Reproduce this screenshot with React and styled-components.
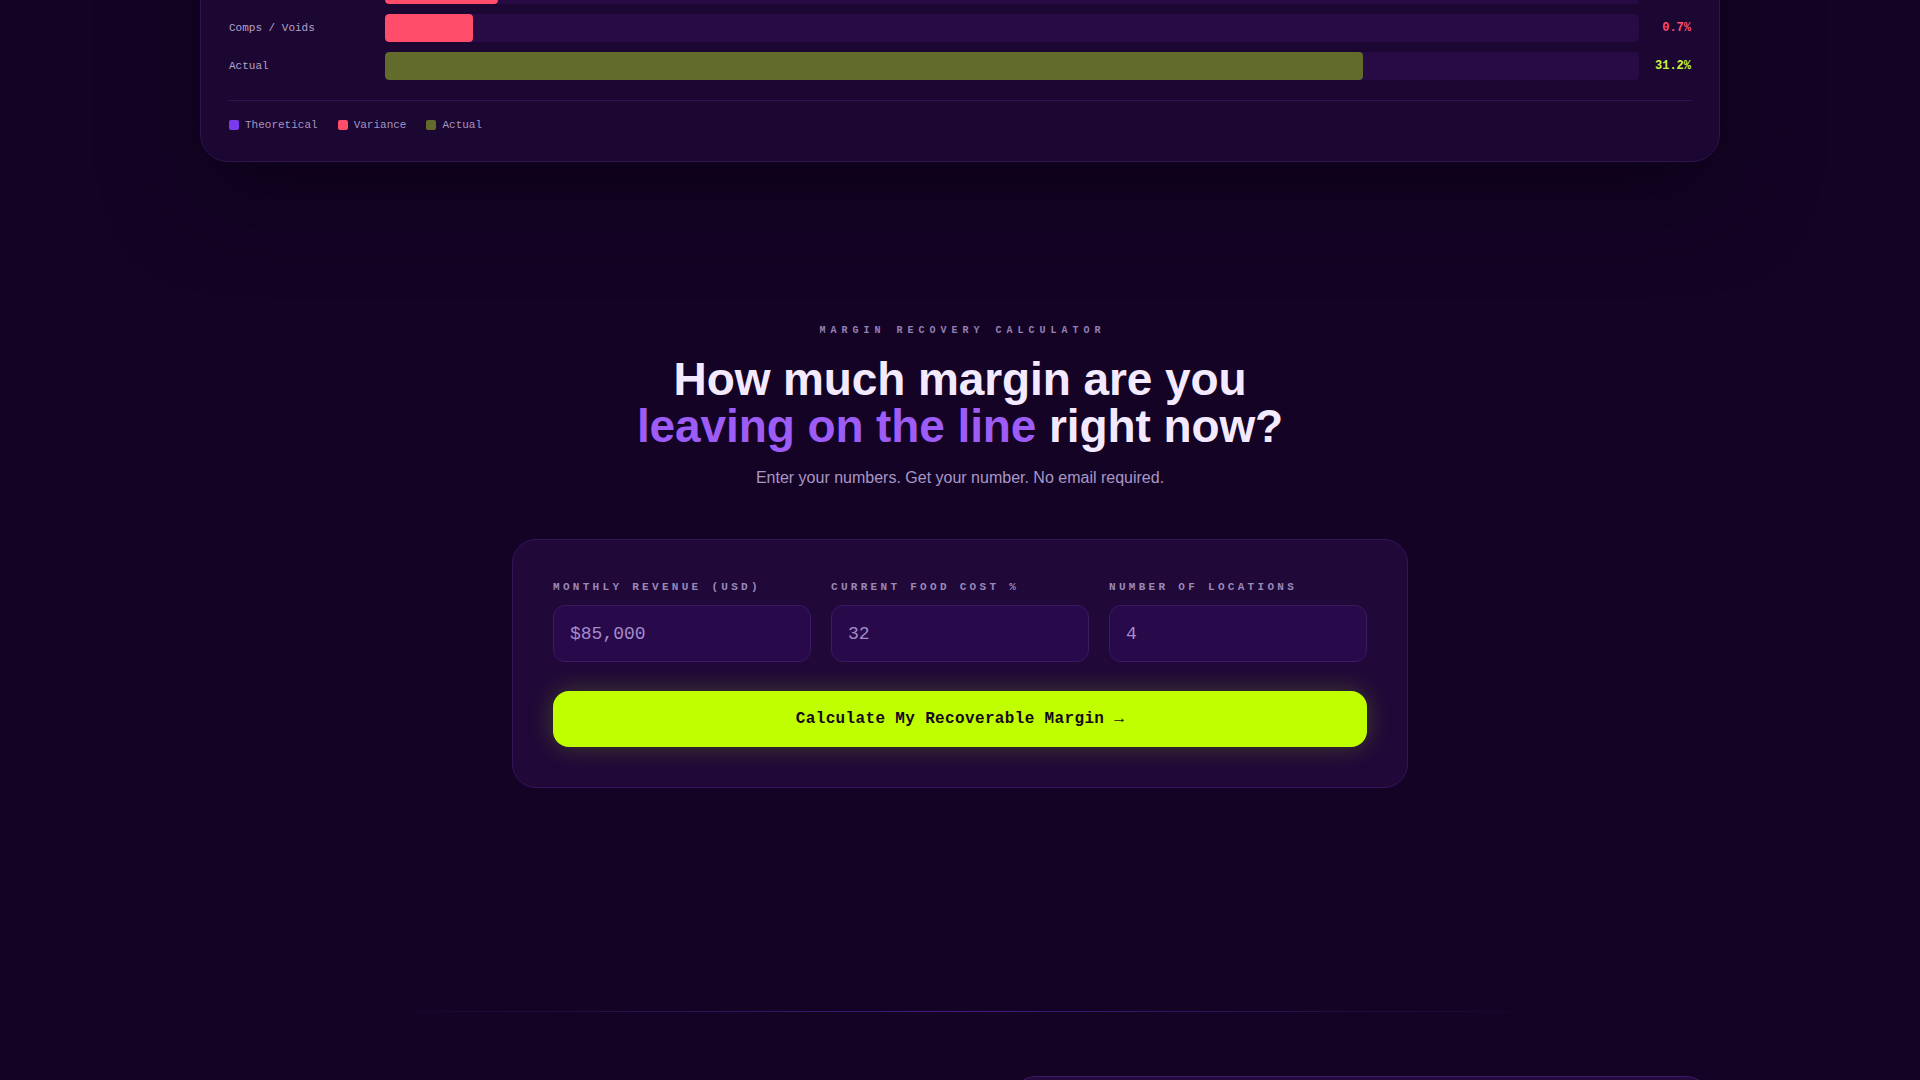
import React from 'react';
import styled, { createGlobalStyle } from 'styled-components';

const GlobalStyle = createGlobalStyle`
  * { box-sizing: border-box; }
  body {
    margin: 0;
    background: #150325;
    font-family: "Liberation Sans", Arial, sans-serif;
  }
`;

const mono = `"Liberation Mono", "DejaVu Sans Mono", monospace`;

const Page = styled.main`
  overflow: hidden;
`;

const Container = styled.div`
  max-width: ${(props) => props.width || 1520}px;
  margin: 0 auto;
`;

/* ---------- variance chart (tail of the previous section) ---------- */

const ChartCard = styled.div`
  margin-top: -128px;
  background: #1c0632;
  border: 1px solid #2f1550;
  border-radius: 28px;
  padding: 27px 28px 30px;
  box-shadow: 0 30px 90px rgba(6, 0, 14, 0.55);
`;

const Rows = styled.div`
  display: flex;
  flex-direction: column;
  gap: 10px;
`;

const Row = styled.div`
  display: grid;
  grid-template-columns: 140px 1fr 36px;
  gap: 16px;
  align-items: center;
  height: 28px;
`;

const RowLabel = styled.span`
  font-family: ${mono};
  font-size: 11px;
  color: #b3a3cb;
  white-space: nowrap;
`;

const Track = styled.div`
  height: 28px;
  background: #280a45;
  border-radius: 4px;
  overflow: hidden;
`;

const Fill = styled.div`
  height: 100%;
  background: ${(props) => props.color};
  border-radius: 4px;
`;

const Pct = styled.span`
  font-family: ${mono};
  font-size: 12px;
  font-weight: 700;
  text-align: right;
  color: ${(props) => props.color};
`;

const Divider = styled.div`
  margin-top: 20px;
  height: 1px;
  background: #2d1350;
`;

const Legend = styled.div`
  display: flex;
  gap: 20px;
  padding-top: 18px;
`;

const LegendItem = styled.span`
  display: flex;
  align-items: center;
  gap: 6px;
  font-family: ${mono};
  font-size: 11px;
  line-height: 12px;
  color: #a595bf;
`;

const Swatch = styled.i`
  width: 10px;
  height: 10px;
  border-radius: 2px;
  background: ${(props) => props.color};
`;

/* ---------- calculator ---------- */

const CalcSection = styled.section`
  padding: 161px 24px 223px;
  text-align: center;
`;

const Eyebrow = styled.div`
  font-family: ${mono};
  font-size: 10px;
  line-height: 15px;
  font-weight: 700;
  letter-spacing: 5px;
  padding-left: 5px;
  color: #9480b4;
`;

const Heading = styled.h2`
  margin: 18px 0 0;
  font-size: 46px;
  line-height: 47px;
  font-weight: 700;
  letter-spacing: -0.1px;
  color: #f3eaff;
`;

const Accent = styled.span`
  color: #9d5cf6;
`;

const Sub = styled.p`
  margin: 16px 0 0;
  font-size: 16px;
  line-height: 24px;
  color: #a897c7;
`;

const CalcCard = styled.div`
  max-width: 896px;
  margin: 49px auto 0;
  padding: 40px;
  background: #200838;
  border: 1px solid #33165a;
  border-radius: 24px;
  text-align: left;
`;

const Fields = styled.div`
  display: grid;
  grid-template-columns: repeat(3, minmax(0, 1fr));
  gap: 20px;
`;

const Field = styled.label`
  display: flex;
  flex-direction: column;
  gap: 11px;
  min-width: 0;
`;

const FieldLabel = styled.span`
  font-family: ${mono};
  font-size: 11px;
  line-height: 14px;
  font-weight: 700;
  letter-spacing: 3.3px;
  color: #9a88b8;
  white-space: nowrap;
`;

const Input = styled.input`
  width: 100%;
  min-width: 0;
  height: 57px;
  padding: 0 16px;
  background: #28094a;
  border: 1px solid #391a63;
  border-radius: 12px;
  font-family: ${mono};
  font-size: 18px;
  color: #a48ccc;
  outline: none;
`;

const CalcButton = styled.button`
  display: block;
  width: 100%;
  height: 56px;
  margin-top: 29px;
  border: none;
  border-radius: 16px;
  background: #c0ff00;
  box-shadow: 0 0 26px rgba(192, 255, 0, 0.22);
  font-family: ${mono};
  font-size: 16px;
  font-weight: 700;
  letter-spacing: 0.35px;
  color: #150a1c;
  cursor: pointer;
`;

/* ---------- next section ---------- */

const SectionLine = styled.div`
  width: 1188px;
  height: 1px;
  margin: 0 auto;
  background: linear-gradient(90deg, rgba(124, 58, 237, 0), rgba(124, 58, 237, 0.45) 50%, rgba(124, 58, 237, 0));
`;

const NextSection = styled.section`
  padding: 64px 0 120px;
`;

const NextGrid = styled.div`
  display: grid;
  grid-template-columns: 1fr 698px;
  gap: 64px;
  align-items: center;
`;

const NextCopy = styled.div`
  color: #f3eaff;
  font-size: 32px;
  font-weight: 700;
`;

const NextCard = styled.div`
  height: 420px;
  background: #220a3c;
  border: 1px solid #3b1b66;
  border-radius: 24px;
`;

const rows = [
  { label: 'Theoretical', pct: '28.0%', width: 70, color: '#7c3aed', text: '#a78bfa' },
  { label: 'Waste / Spoilage', pct: '1.6%', width: 12, color: '#ff4d6a', text: '#ff4d6d' },
  { label: 'Over-portioning', pct: '0.9%', width: 9, color: '#ff4d6a', text: '#ff4d6d' },
  { label: 'Comps / Voids', pct: '0.7%', width: 7, color: '#ff4d6a', text: '#ff4d6d' },
  { label: 'Actual', pct: '31.2%', width: 78, color: '#626b2b', text: '#c8f53a' },
];

const fields = [
  { label: 'MONTHLY REVENUE (USD)', value: '$85,000' },
  { label: 'CURRENT FOOD COST %', value: '32' },
  { label: 'NUMBER OF LOCATIONS', value: '4' },
];

export default function App() {
  return (
    <Page>
      <GlobalStyle />
      <Container>
        <ChartCard>
          <Rows>
            {rows.map((r) => (
              <Row key={r.label}>
                <RowLabel>{r.label}</RowLabel>
                <Track>
                  <Fill color={r.color} style={{ width: `${r.width}%` }} />
                </Track>
                <Pct color={r.text}>{r.pct}</Pct>
              </Row>
            ))}
          </Rows>
          <Divider />
          <Legend>
            <LegendItem><Swatch color="#7c3aed" />Theoretical</LegendItem>
            <LegendItem><Swatch color="#ff4d6a" />Variance</LegendItem>
            <LegendItem><Swatch color="#626b2b" />Actual</LegendItem>
          </Legend>
        </ChartCard>
      </Container>

      <CalcSection>
        <Eyebrow>MARGIN RECOVERY CALCULATOR</Eyebrow>
        <Heading>
          How much margin are you
          <br />
          <Accent>leaving on the line</Accent> right now?
        </Heading>
        <Sub>Enter your numbers. Get your number. No email required.</Sub>
        <CalcCard>
          <Fields>
            {fields.map((f) => (
              <Field key={f.label}>
                <FieldLabel>{f.label}</FieldLabel>
                <Input defaultValue={f.value} />
              </Field>
            ))}
          </Fields>
          <CalcButton>Calculate My Recoverable Margin →</CalcButton>
        </CalcCard>
      </CalcSection>

      <SectionLine />

      <NextSection>
        <Container width={1500}>
          <NextGrid>
            <NextCopy>See where every point goes.</NextCopy>
            <NextCard />
          </NextGrid>
        </Container>
      </NextSection>
    </Page>
  );
}
